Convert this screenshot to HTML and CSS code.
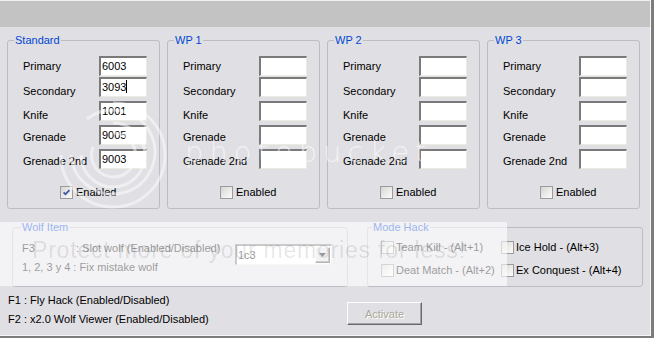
FILE: index.html
```html
<!DOCTYPE html>
<html>
<head>
<meta charset="utf-8">
<title>Hack panel</title>
<link rel="stylesheet" href="styles.css">
</head>
<body>
<div class="window">
  <div class="frame">
    <div class="band"></div>
    <div class="main">
      <div class="weapons">
        <fieldset class="group wp">
          <legend>Standard</legend>
          <div class="row r1"><span class="lbl">Primary</span><span class="box">6003</span></div>
          <div class="row r2"><span class="lbl">Secondary</span><span class="box">3093<span class="caret"></span></span></div>
          <div class="row r3"><span class="lbl">Knife</span><span class="box">1001</span></div>
          <div class="row r4"><span class="lbl">Grenade</span><span class="box">9005</span></div>
          <div class="row r5"><span class="lbl">Grenade 2nd</span><span class="box">9003</span></div>
          <div class="enable"><span class="chk"><svg width="11" height="11" viewBox="0 0 11 11"><path d="M2.6 5.4 L4.5 7.3 L8.4 3.2" fill="none" stroke="#3f55a6" stroke-width="1.8"/></svg></span><span>Enabled</span></div>
        </fieldset>
        <fieldset class="group wp">
          <legend>WP 1</legend>
          <div class="row r1"><span class="lbl">Primary</span><span class="box"></span></div>
          <div class="row r2"><span class="lbl">Secondary</span><span class="box"></span></div>
          <div class="row r3"><span class="lbl">Knife</span><span class="box"></span></div>
          <div class="row r4"><span class="lbl">Grenade</span><span class="box"></span></div>
          <div class="row r5"><span class="lbl">Grenade 2nd</span><span class="box"></span></div>
          <div class="enable"><span class="chk"></span><span>Enabled</span></div>
        </fieldset>
        <fieldset class="group wp">
          <legend>WP 2</legend>
          <div class="row r1"><span class="lbl">Primary</span><span class="box"></span></div>
          <div class="row r2"><span class="lbl">Secondary</span><span class="box"></span></div>
          <div class="row r3"><span class="lbl">Knife</span><span class="box"></span></div>
          <div class="row r4"><span class="lbl">Grenade</span><span class="box"></span></div>
          <div class="row r5"><span class="lbl">Grenade 2nd</span><span class="box"></span></div>
          <div class="enable"><span class="chk"></span><span>Enabled</span></div>
        </fieldset>
        <fieldset class="group wp">
          <legend>WP 3</legend>
          <div class="row r1"><span class="lbl">Primary</span><span class="box"></span></div>
          <div class="row r2"><span class="lbl">Secondary</span><span class="box"></span></div>
          <div class="row r3"><span class="lbl">Knife</span><span class="box"></span></div>
          <div class="row r4"><span class="lbl">Grenade</span><span class="box"></span></div>
          <div class="row r5"><span class="lbl">Grenade 2nd</span><span class="box"></span></div>
          <div class="enable"><span class="chk"></span><span>Enabled</span></div>
        </fieldset>
      </div>

      <div class="lower">
        <fieldset class="group wolf">
          <legend>Wolf Item</legend>
          <div class="wolf-body">
            <div class="wolf-text">
              <div class="wline"><span class="key">F3</span><span>: Slot wolf (Enabled/Disabled)</span></div>
              <div class="wline second">1, 2, 3 y 4 : Fix mistake wolf</div>
            </div>
            <div class="combo">
              <span class="combo-val">1c3</span>
              <span class="combo-btn"><svg width="7" height="4" viewBox="0 0 7 4"><path d="M0 0 H7 L3.5 4 Z" fill="#000"/></svg></span>
            </div>
          </div>
        </fieldset>
        <fieldset class="group mode">
          <legend>Mode Hack</legend>
          <div class="mode-grid">
            <div class="opt"><span class="chk"></span><span>Team Kill - (Alt+1)</span></div>
            <div class="opt"><span class="chk"></span><span>Ice Hold - (Alt+3)</span></div>
            <div class="opt"><span class="chk"></span><span>Deat Match - (Alt+2)</span></div>
            <div class="opt"><span class="chk"></span><span>Ex Conquest - (Alt+4)</span></div>
          </div>
        </fieldset>
      </div>

      <div class="footer">
        <div class="keys">
          <div>F1 : Fly Hack (Enabled/Disabled)</div>
          <div class="second">F2 : x2.0 Wolf Viewer (Enabled/Disabled)</div>
        </div>
        <div class="btn">Activate</div>
      </div>
    </div>
  </div>

  <svg class="wm-logo" width="112" height="112" viewBox="0 0 112 112">
    <g fill="none" stroke="#ffffff" stroke-width="3">
      <path d="M56 4 A52 52 0 1 1 4 56"/>
      <path d="M30 20 A42 42 0 1 1 14 56"/>
      <path d="M56 24 A32 32 0 1 1 24 56"/>
      <path d="M56 34 A22 22 0 1 1 36 48"/>
    </g>
  </svg>
  <div class="wm-text">photobucket</div>
  <div class="promo">Protect more of your memories for less!</div>
</div>
</body>
</html>
```

FILE: styles.css
```css
html, body {
  margin: 0;
  padding: 0;
  background: #e0dfe3;
}

body {
  font-family: "Liberation Sans", Arial, sans-serif;
  font-size: 11px;
  color: #000;
}

.window {
  position: relative;
  width: 654px;
  height: 338px;
  box-sizing: border-box;
  background: #e0dfe3;
  border-right: 3px solid #7c7c7c;
  border-bottom: 2px solid #7c7c7c;
  overflow: hidden;
}

.frame {
  height: 100%;
  box-sizing: border-box;
  border-right: 1px solid #f6f6f6;
  border-bottom: 1px solid #f6f6f6;
}

.band {
  height: 26px;
  border-top: 1px solid #f0f0f0;
  background: #c3c3c3;
}

.main {
  padding: 7px 0 0 7px;
}

.weapons {
  display: flex;
  gap: 7px;
}

fieldset.group {
  margin: 0;
  padding: 0;
  min-width: 0;
  box-sizing: border-box;
  border: 1px solid #bdbcc5;
  border-radius: 3px;
}

fieldset.group legend {
  padding: 0 1px;
  margin-left: 6px;
  color: #0046d5;
  font-size: 11px;
  line-height: 13px;
}

.wp {
  width: 153px;
  height: 175px;
  padding-top: 9px !important;
}

.row {
  display: flex;
  height: 20px;
  padding-left: 15px;
  margin-top: 4px;
}

.row.r1 { margin-top: 0; }
.row.r2 { margin-top: 1px; }

.lbl {
  width: 76px;
  line-height: 13px;
  white-space: nowrap;
}

.r1 .lbl { padding-top: 4px; }
.r2 .lbl, .r3 .lbl { padding-top: 8px; }
.r4 .lbl, .r5 .lbl { padding-top: 6px; }

.box {
  box-sizing: border-box;
  width: 48px;
  height: 20px;
  background: #fff;
  border-style: solid;
  border-width: 2px 1px 1px 2px;
  border-color: #7a7a7a #ecebe0 #ecebe0 #7a7a7a;
  padding-left: 1px;
  line-height: 17px;
  font-size: 11px;
  white-space: nowrap;
}

.caret {
  display: inline-block;
  width: 1px;
  height: 13px;
  background: #000;
  vertical-align: -2px;
}

.enable {
  display: flex;
  align-items: center;
  gap: 3px;
  height: 13px;
  line-height: 13px;
  margin: 17px 0 0 52px;
}

.chk {
  flex: none;
  width: 13px;
  height: 13px;
  box-sizing: border-box;
  border: 1px solid #9a9aa0;
  background: linear-gradient(135deg, #d4d4d0 0%, #eeeeec 60%, #fbfbfb 100%);
  display: flex;
  align-items: center;
  justify-content: center;
}

.lower {
  display: flex;
  margin-top: 12px;
  padding-left: 5px;
}

.wolf {
  width: 336px;
  height: 66px;
  padding-top: 8px !important;
}

.wolf legend {
  margin-left: 8px !important;
}

.wolf-body {
  display: flex;
  padding-left: 9px;
}

.wolf-text {
  width: 213px;
}

.wline {
  display: flex;
  line-height: 13px;
  white-space: nowrap;
}

.wline.second {
  margin-top: 6px;
}

.key {
  width: 54px;
}

.combo {
  margin-top: 2px;
  width: 97px;
  height: 21px;
  box-sizing: border-box;
  display: flex;
  padding: 1px 1px 1px 0;
  background: #fff;
  border-style: solid;
  border-width: 2px 1px 1px 2px;
  border-color: #7a7a7a #ecebe0 #ecebe0 #7a7a7a;
}

.combo-val {
  flex: 1;
  padding-left: 1px;
  line-height: 16px;
}

.combo-btn {
  width: 15px;
  height: 16px;
  box-sizing: border-box;
  border: 1px solid;
  border-color: #f4f4f4 #404040 #404040 #f4f4f4;
  box-shadow: inset -1px -1px #8a8a8a;
  background: #e0dfe3;
  display: flex;
  align-items: center;
  justify-content: center;
}

.mode {
  width: 276px;
  height: 66px;
  margin-left: 19px !important;
  padding-top: 7px !important;
}

.mode legend {
  margin-left: 4px !important;
}

.mode-grid {
  display: grid;
  grid-template-columns: 120px auto;
  row-gap: 10px;
  padding-left: 13px;
}

.opt {
  display: flex;
  align-items: center;
  gap: 2px;
  height: 13px;
  line-height: 13px;
  white-space: nowrap;
}

.footer {
  display: flex;
  margin-top: 7px;
}

.keys {
  width: 340px;
  box-sizing: border-box;
  padding-left: 1px;
}

.keys div {
  line-height: 13px;
  white-space: nowrap;
}

.keys .second {
  margin-top: 6px;
}

.btn {
  margin-top: 8px;
  width: 75px;
  height: 23px;
  box-sizing: border-box;
  border: 1px solid;
  border-color: #ffffff #6a6a6a #6a6a6a #ffffff;
  box-shadow: inset -1px -1px #a3a3a8;
  display: flex;
  align-items: center;
  justify-content: center;
  color: #aca899;
  text-shadow: 1px 1px #ffffff;
}

/* photobucket watermark overlay */
.wm-logo {
  position: absolute;
  left: 57px;
  top: 99px;
  opacity: 0.5;
}

.wm-text {
  position: absolute;
  left: 185px;
  top: 138px;
  font-family: "DejaVu Sans", sans-serif;
  font-weight: 200;
  font-size: 29px;
  line-height: 29px;
  letter-spacing: 6px;
  color: rgba(255, 255, 255, 0.6);
  white-space: nowrap;
}

.promo {
  position: absolute;
  left: 0;
  top: 222px;
  width: 507px;
  height: 64px;
  box-sizing: border-box;
  padding: 17px 0 0 32px;
  background: rgba(255, 255, 255, 0.6);
  font-family: "Liberation Sans", Arial, sans-serif;
  font-size: 23px;
  line-height: 23px;
  letter-spacing: 0.8px;
  color: rgba(0, 0, 0, 0.1);
  white-space: nowrap;
  overflow: hidden;
}
```
